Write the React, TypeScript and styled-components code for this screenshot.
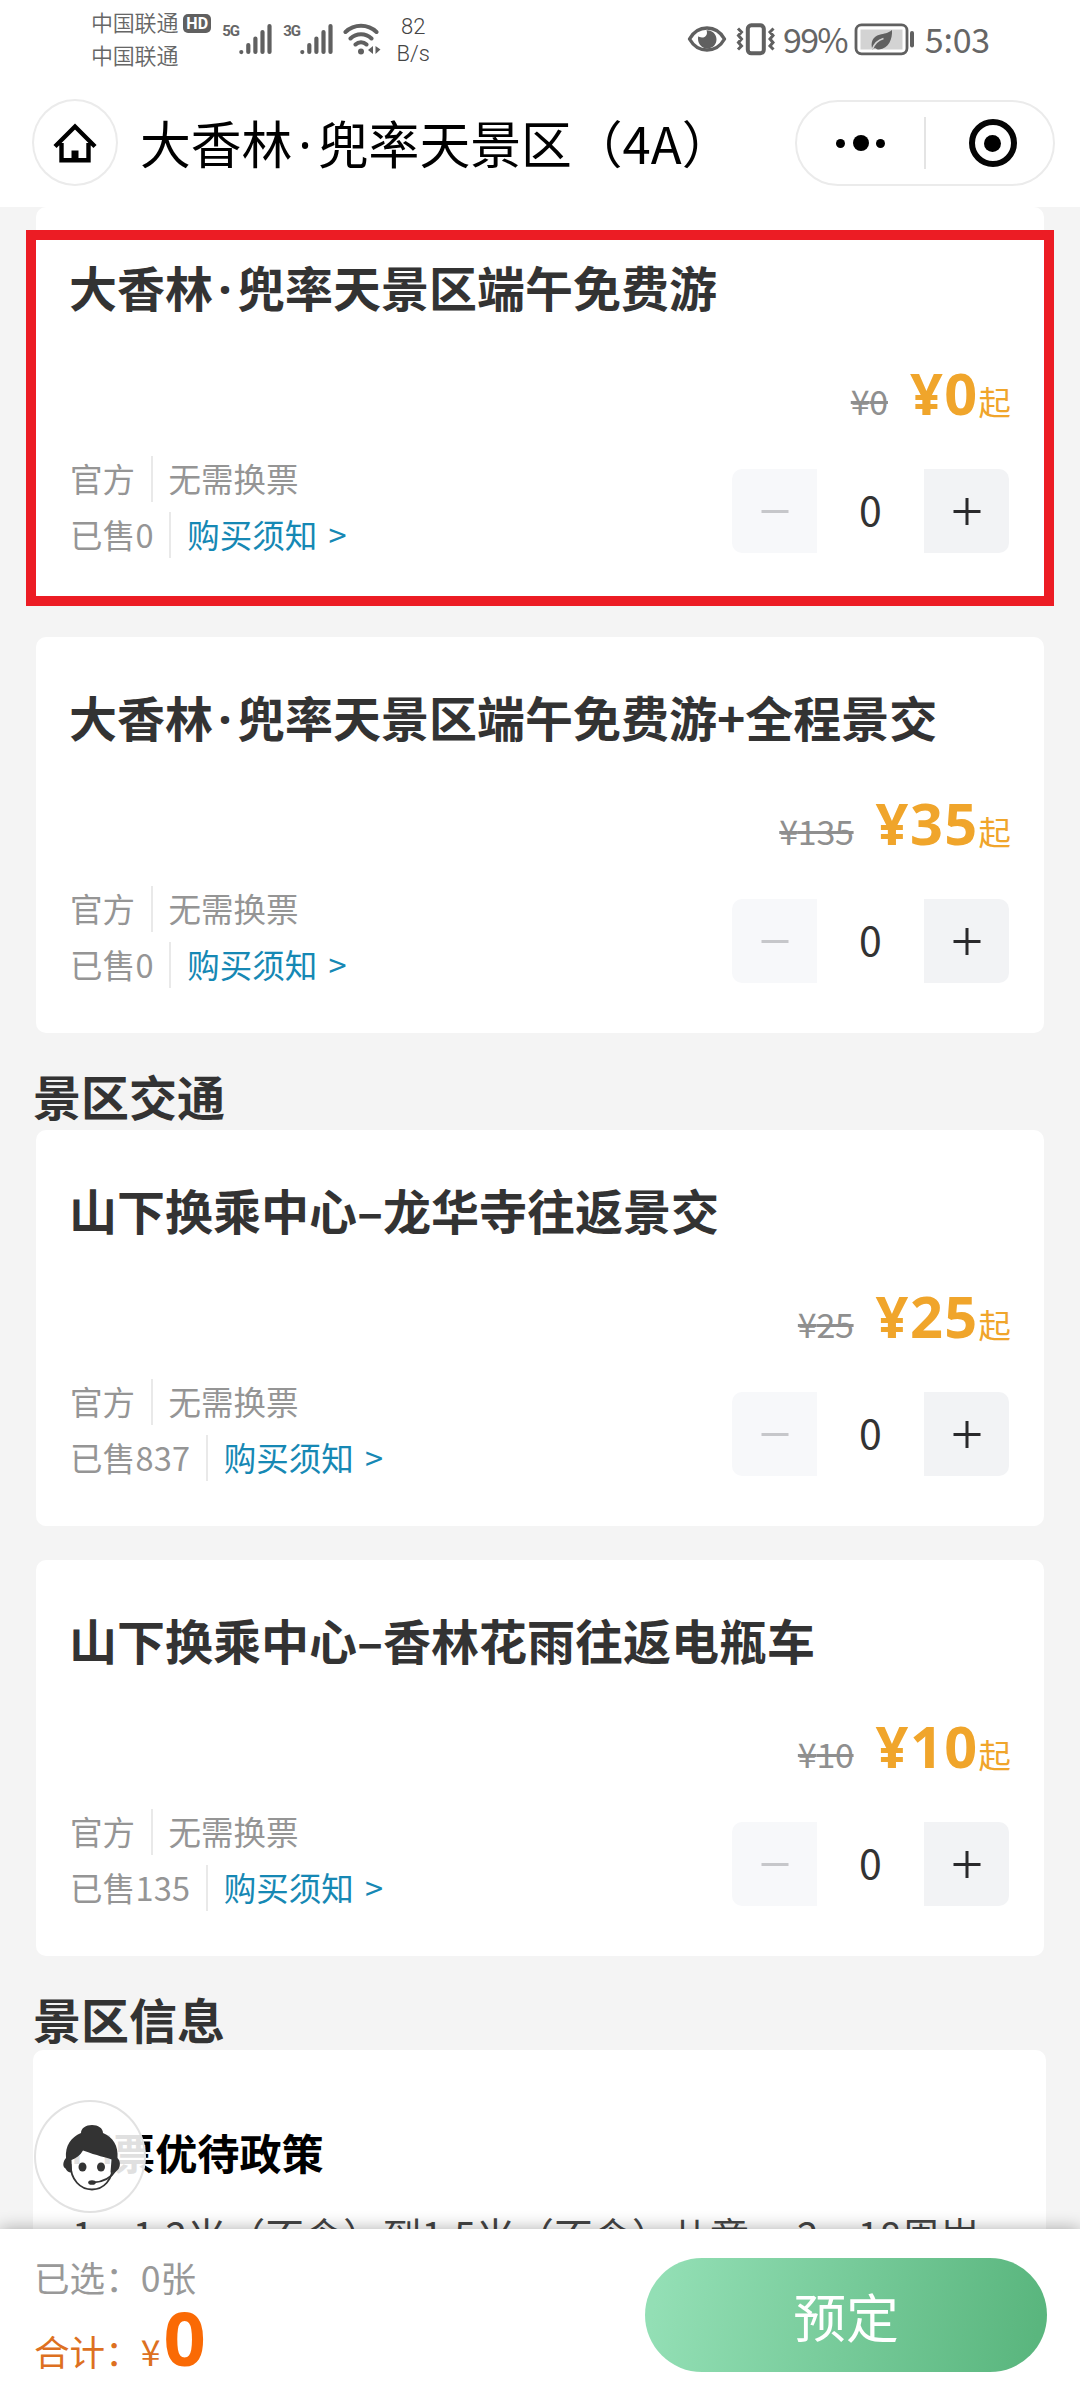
import React from "react";
import styled, { createGlobalStyle } from "styled-components";

const GlobalStyle = createGlobalStyle`
  * { box-sizing: border-box; }
  body {
    margin: 0;
    background: #f4f4f4;
    font-family: "Noto Sans CJK SC", "Noto Sans", sans-serif;
    color: #333;
  }
  button { font-family: inherit; border: 0; padding: 0; }
`;

const Screen = styled.div`
  width: 1080px;
  height: 2400px;
  display: flex;
  flex-direction: column;
  overflow: hidden;
  background: #f4f4f4;
`;

/* ---------- status bar ---------- */

const StatusBar = styled.div`
  height: 80px;
  flex: none;
  display: flex;
  justify-content: space-between;
  padding: 0 90px 0 91px;
  background: #fff;
  color: #666;
`;

const StatusGroup = styled.div`
  display: flex;
  align-items: flex-start;
`;

const Carriers = styled.div`
  padding-top: 5px;
  font-size: 22px;
  line-height: 33px;
  letter-spacing: -0.2px;
  font-weight: 350;
  white-space: nowrap;
`;

const HdBadge = styled.span`
  width: 28px;
  height: 19px;
  margin: 14px 0 0 5px;
  border-radius: 5px;
  background: #606060;
  color: #fff;
  font: 700 16px/19px Roboto, sans-serif;
  text-align: center;
`;

const SignalWrap = styled.div<{ $left: number }>`
  display: flex;
  margin-left: ${(p) => p.$left}px;
  padding-top: 23px;
`;

const NetType = styled.span`
  width: 17px;
  font: 700 15px/16px Roboto, sans-serif;
  letter-spacing: -1px;
`;

const Wifi = styled.svg`
  margin: 22px 0 0 10px;
`;

const Speed = styled.div`
  margin-left: 13px;
  padding-top: 13px;
  width: 34px;
  font: 300 22px/27px Roboto, sans-serif;
  text-align: center;
  color: #444;
`;

const StatusIcon = styled.svg<{ $left?: number }>`
  margin: 22px 0 0 ${(p) => p.$left ?? 0}px;
`;

const StatusText = styled.span<{ $left: number; $track: number }>`
  margin-left: ${(p) => p.$left}px;
  padding-top: 16px;
  font-size: 34px;
  line-height: 46px;
  letter-spacing: ${(p) => p.$track}px;
`;

/* ---------- navigation ---------- */

const NavBar = styled.header`
  height: 127px;
  flex: none;
  display: flex;
  align-items: flex-start;
  padding: 19px 25px 0 32px;
  background: #fff;
`;

const HomeButton = styled.button`
  width: 86px;
  height: 87px;
  border: 2px solid #ebebeb;
  border-radius: 50%;
  background: #fff;
  display: flex;
  align-items: center;
  justify-content: center;
`;

const NavTitle = styled.h1`
  flex: 1;
  margin: 11px 0 0 22px;
  font-size: 50.8px;
  line-height: 64px;
  font-weight: 400;
  color: #000;
  white-space: nowrap;
`;

const MiddleDot = styled.span`
  display: inline-block;
  width: 0.5em;
  font-family: "Noto Sans", sans-serif;
  line-height: 1;
  text-align: center;
`;

const Capsule = styled.div`
  width: 260px;
  height: 86px;
  margin-top: 1px;
  border: 2px solid #ebebeb;
  border-radius: 43px;
  display: flex;
  align-items: center;
`;

const CapsuleHalf = styled.div<{ $inset?: number }>`
  width: 127px;
  display: flex;
  align-items: center;
  justify-content: center;
  gap: 7.5px;
  padding-left: ${(p) => p.$inset ?? 0}px;
`;

const CapsuleRule = styled.div`
  width: 2px;
  height: 52px;
  background: #e4e4e4;
`;

const Dot = styled.i<{ $size: number }>`
  width: ${(p) => p.$size}px;
  height: ${(p) => p.$size}px;
  border-radius: 50%;
  background: #000;
`;

const Target = styled.div`
  width: 48px;
  height: 48px;
  flex: none;
  border: 6px solid #050505;
  border-radius: 50%;
  display: flex;
  align-items: center;
  justify-content: center;
`;

/* ---------- feed ---------- */

const Feed = styled.main`
  flex: 1;
  min-height: 0;
  overflow: hidden;
  padding: 0 36px;
  position: relative;
`;

const TicketList = styled.div`
  display: flex;
  flex-direction: column;
  gap: 34px;
`;

const Card = styled.article`
  height: 396px;
  padding: 49px 34px 0 34px;
  border-radius: 10px;
  background: #fff;
`;

const CardTitle = styled.h2`
  margin: 0 0 0 -1px;
  font-size: 48px;
  line-height: 60px;
  font-weight: 700;
  white-space: nowrap;
`;

const PriceRow = styled.div`
  display: flex;
  justify-content: flex-end;
  align-items: baseline;
  height: 60px;
  margin: 47px -1px 0 0;
  line-height: 60px;
  white-space: nowrap;
`;

const OldPrice = styled.del`
  margin-right: 22px;
  font-size: 34px;
  letter-spacing: -0.3px;
  color: #8f8f8f;
  text-decoration-thickness: 3px;
`;

const Price = styled.strong`
  font-family: "Noto Sans", "Noto Sans CJK SC", sans-serif;
  font-size: 57.6px;
  letter-spacing: 1.4px;
  color: #f0a52b;
`;

const PriceSuffix = styled.span`
  font-size: 32.4px;
  color: #f0a52b;
`;

const CardBottom = styled.div`
  display: flex;
  justify-content: space-between;
  margin: 33px 1px 0 0;
`;

const Metas = styled.div`
  display: flex;
  flex-direction: column;
  gap: 10px;
`;

const MetaLine = styled.div`
  display: flex;
  height: 46px;
  font-size: 32.5px;
  line-height: 44px;
  color: #959595;
  white-space: nowrap;
`;

const MetaRule = styled.i`
  width: 2px;
  height: 46px;
  margin: 0 16px 0 15.5px;
  background: #e9e9e9;
`;

const Sold = styled.span`
  letter-spacing: 0.2px;
`;

const Notice = styled.a`
  color: #1688b4;
  word-spacing: 4px;
`;

const Stepper = styled.div`
  display: flex;
  align-items: center;
  height: 84px;
  margin-top: 13px;
`;

const StepButton = styled.button<{ $kind: "minus" | "plus" }>`
  width: 85px;
  height: 84px;
  display: flex;
  align-items: center;
  justify-content: center;
  border-radius: ${(p) => (p.$kind === "minus" ? "10px 0 0 10px" : "0 10px 10px 0")};
  background: ${(p) => (p.$kind === "minus" ? "#f7f8fa" : "#f2f3f5")};
  color: ${(p) => (p.$kind === "minus" ? "#c6c7ca" : "#29292b")};
`;

const StepValue = styled.span`
  width: 107px;
  height: 84px;
  font-size: 41px;
  line-height: 79px;
  text-align: center;
`;

const SectionTitle = styled.h2<{ $height: number }>`
  height: ${(p) => p.$height}px;
  margin: 0 0 0 -3px;
  padding-top: 32px;
  font-size: 48px;
  line-height: 60px;
  font-weight: 700;
`;

const InfoCard = styled.section`
  height: 400px;
  margin: 0 -2px 0 -3px;
  padding: 76px 37px 0 38px;
  border-radius: 10px;
  background: #fff;
`;

const InfoTitle = styled.h3`
  margin: 0;
  font-size: 42.1px;
  line-height: 52px;
  font-weight: 700;
  color: #000;
`;

const InfoText = styled.p`
  margin: 30px 0 0 1px;
  font-size: 38.9px;
  line-height: 52px;
  letter-spacing: 0.15px;
  color: #444;
  white-space: nowrap;
`;

const Highlight = styled.div`
  position: absolute;
  z-index: 1;
  left: 26px;
  top: 23px;
  width: 1028px;
  height: 376px;
  border: 10px solid #ec1c24;
  pointer-events: none;
`;

const ServiceButton = styled.button`
  position: absolute;
  left: 34px;
  top: 1893px;
  width: 112px;
  height: 113px;
  border: 2px solid #e2e2e2;
  border-radius: 50%;
  background: rgba(255, 255, 255, 0.88);
  display: flex;
  align-items: center;
  justify-content: center;
  padding: 3px 0 0 3px;
`;

/* ---------- footer ---------- */

const Footer = styled.footer`
  position: relative;
  z-index: 2;
  height: 171px;
  flex: none;
  display: flex;
  justify-content: space-between;
  padding: 29px 33px 0 34px;
  background: #fff;
  box-shadow: 0 0 16px rgba(0, 0, 0, 0.32);
`;

const Summary = styled.div`
  font-size: 35.6px;
  white-space: nowrap;
`;

const Selected = styled.div`
  margin-top: -6px;
  line-height: 50px;
  color: #999;
`;

const Total = styled.div`
  display: flex;
  align-items: baseline;
  height: 80px;
  margin-top: -4px;
  line-height: 80px;
  color: #dd7021;
`;

const TotalValue = styled.strong`
  margin-left: 3px;
  font-family: "Noto Sans", sans-serif;
  font-size: 74px;
  color: #fa6a05;
`;

const BookButton = styled.button`
  width: 402px;
  height: 114px;
  border-radius: 57px;
  background: linear-gradient(100deg, #93dfb5 4%, #5ab67e 96%);
  color: #fff;
  font-size: 52.8px;
  line-height: 112px;
`;

/* ---------- drawings ---------- */

const Bars = () => (
  <svg width="33" height="32" viewBox="0 0 33 32" stroke="#606060" strokeWidth="4.2" strokeLinecap="round">
    <path d="M2.3 29v0.1M9.3 22v7M16.4 15.500v13.500M23.500 9v20M30.500 3v26" />
  </svg>
);

const Signal = ({ type, left }: { type: string; left: number }) => (
  <SignalWrap $left={left}>
    <NetType>{type}</NetType>
    <Bars />
  </SignalWrap>
);

const WifiIcon = () => (
  <Wifi width="40" height="34" viewBox="0 0 40 34" fill="none" stroke="#606060" strokeWidth="4" strokeLinecap="round">
    <path d="M2.500 10a22.500 22.500 0 0 1 31 0M7.500 16.500a15 15 0 0 1 21 0M12.500 22.500a8 8 0 0 1 11 0" />
    <circle cx="18" cy="29.500" r="3" fill="#606060" stroke="none" />
    <path d="M30 24v8l-5-4zM32.500 24v8l5-4.500z" fill="#606060" stroke="none" />
  </Wifi>
);

const EyeIcon = () => (
  <StatusIcon width="40" height="34" viewBox="0 0 40 34" fill="none">
    <path d="M2.500 17C7 9 13 6 20 6s13 3 17.500 11C33 25 27 28 20 28S7 25 2.500 17z" stroke="#606060" strokeWidth="3.4" strokeLinejoin="round" />
    <path d="M19.500 8.200c1.500 3.800-.5 7.300-4.500 7.300-1.800 0-3-.7-3.800-1.200-1.200 6.700 3 12.200 9 12.200 5.300 0 9.300-4 9.300-9.300 0-5.200-4.500-9.200-10-9z" fill="#606060" />
  </StatusIcon>
);

const VibrateIcon = () => (
  <StatusIcon $left={9} width="40" height="34" viewBox="0 0 40 34" fill="none" stroke="#606060">
    <rect x="11.800" y="3.300" width="16" height="28" rx="3.500" strokeWidth="4" />
    <path d="M2 6.500l3.500 3.500L2.500 13.500l3 3.500-3 3.500 3 3.500L2 27.500M37.500 6.500L34 10l3 3.500-3 3.500 3 3.500-3 3.500 3.500 3.500" strokeWidth="3" />
  </StatusIcon>
);

const BatteryIcon = () => (
  <StatusIcon $left={7} width="62" height="34" viewBox="0 0 62 34" fill="none">
    <rect x="2" y="2.800" width="51" height="29" rx="5.500" stroke="#606060" strokeWidth="2.800" />
    <rect x="6.500" y="7.500" width="42" height="20" fill="#d3d3d3" />
    <path d="M18.500 27.500c-2.500-7 .5-13 7-14.700 5-1.500 8-1.300 12.500-4.800.5 9-3 18.500-13 19.500-2 0-3-.6-4-1.500z" fill="#606060" />
    <path d="M18.500 27c2-6 6-9 11-10.500" stroke="#d3d3d3" strokeWidth="1.800" />
    <path d="M58 11v12.500" stroke="#606060" strokeWidth="4" strokeLinecap="round" />
  </StatusIcon>
);

const HomeIcon = () => (
  <svg width="46" height="42" viewBox="0 0 46 42">
    <path d="M3 24.500L23 4.500l20 20M9.500 21v17.300h27V21" fill="none" stroke="#000" strokeWidth="4.400" />
    <path d="M19.500 28.500h7V39h-7z" fill="#000" />
  </svg>
);

const AgentIcon = () => (
  <svg width="60" height="68" viewBox="0 0 60 68">
    <path d="M8.500 40c0 16 10 25.500 21.500 25.500S51 56 51 40" fill="#fff" stroke="#333" strokeWidth="1.800" />
    <path d="M4 34C3 22 9 13 19 9c0-5 5-8 11-8s11 3 11 8c10 4 15.500 13 14.500 25 3 3 3 8 1 11-2 2.500-5 4-8 3.500l1-13C43 33 36 32 21 26.500c-3 5-7 8-11.500 9.500L10 48.500c-3 .3-5-1-6.500-4C.5 43 .5 38 4 34z" fill="#333" />
    <ellipse cx="20.500" cy="43" rx="4" ry="4.500" fill="#333" />
    <ellipse cx="39" cy="43" rx="4" ry="4.500" fill="#333" />
    <ellipse cx="30" cy="58.500" rx="3.800" ry="2.300" fill="#333" />
    <path d="M31 58.500C42 58 49 54 54 46" fill="none" stroke="#333" strokeWidth="1.800" />
  </svg>
);

const StepIcon = ({ plus }: { plus?: boolean }) => (
  <svg width="28" height="28" viewBox="0 0 28 28" stroke="currentColor" strokeWidth="3">
    <path d={plus ? "M.5 14.500h27M14 1v27" : "M.5 14.500h27"} />
  </svg>
);

/* ---------- page ---------- */

const withDot = (text: string) => {
  const [head, tail] = text.split("·");
  return tail ? (
    <>
      {head}
      <MiddleDot>·</MiddleDot>
      {tail}
    </>
  ) : (
    head
  );
};

type Ticket = { title: string; old: number; price: number; sold: number };

const tickets: Ticket[] = [
  { title: "大香林·兜率天景区端午免费游", old: 0, price: 0, sold: 0 },
  { title: "大香林·兜率天景区端午免费游+全程景交", old: 135, price: 35, sold: 0 },
];

const transport: Ticket[] = [
  { title: "山下换乘中心–龙华寺往返景交", old: 25, price: 25, sold: 837 },
  { title: "山下换乘中心–香林花雨往返电瓶车", old: 10, price: 10, sold: 135 },
];

const TicketCard = ({ title, old, price, sold }: Ticket) => (
  <Card>
    <CardTitle>{withDot(title)}</CardTitle>
    <PriceRow>
      <OldPrice>¥{old}</OldPrice>
      <Price>¥{price}</Price>
      <PriceSuffix>起</PriceSuffix>
    </PriceRow>
    <CardBottom>
      <Metas>
        <MetaLine>
          官方
          <MetaRule />
          无需换票
        </MetaLine>
        <MetaLine>
          <Sold>已售{sold}</Sold>
          <MetaRule />
          <Notice>购买须知 &gt;</Notice>
        </MetaLine>
      </Metas>
      <Stepper>
        <StepButton $kind="minus" aria-label="减少">
          <StepIcon />
        </StepButton>
        <StepValue>0</StepValue>
        <StepButton $kind="plus" aria-label="增加">
          <StepIcon plus />
        </StepButton>
      </Stepper>
    </CardBottom>
  </Card>
);

export default function App() {
  return (
    <Screen>
      <GlobalStyle />
      <StatusBar>
        <StatusGroup>
          <Carriers>
            <div>中国联通</div>
            <div>中国联通</div>
          </Carriers>
          <HdBadge>HD</HdBadge>
          <Signal type="5G" left={11} />
          <Signal type="3G" left={11} />
          <WifiIcon />
          <Speed>
            <div>82</div>
            <div>B/s</div>
          </Speed>
        </StatusGroup>
        <StatusGroup>
          <EyeIcon />
          <VibrateIcon />
          <StatusText $left={7} $track={-1.8}>99%</StatusText>
          <BatteryIcon />
          <StatusText $left={9} $track={-0.2}>5:03</StatusText>
        </StatusGroup>
      </StatusBar>
      <NavBar>
        <HomeButton aria-label="首页">
          <HomeIcon />
        </HomeButton>
        <NavTitle>{withDot("大香林·兜率天景区（4A）")}</NavTitle>
        <Capsule>
          <CapsuleHalf>
            <Dot $size={9} />
            <Dot $size={16} />
            <Dot $size={9} />
          </CapsuleHalf>
          <CapsuleRule />
          <CapsuleHalf $inset={6}>
            <Target>
              <Dot $size={17} />
            </Target>
          </CapsuleHalf>
        </Capsule>
      </NavBar>
      <Feed>
        <TicketList>
          {tickets.map((t) => (
            <TicketCard key={t.title} {...t} />
          ))}
        </TicketList>
        <SectionTitle $height={97}>景区交通</SectionTitle>
        <TicketList>
          {transport.map((t) => (
            <TicketCard key={t.title} {...t} />
          ))}
        </TicketList>
        <SectionTitle $height={94}>景区信息</SectionTitle>
        <InfoCard>
          <InfoTitle>门票优待政策</InfoTitle>
          <InfoText>1、1.2米（不含）到1.5米（不含）儿童、 2、18周岁</InfoText>
        </InfoCard>
        <Highlight />
        <ServiceButton aria-label="客服">
          <AgentIcon />
        </ServiceButton>
      </Feed>
      <Footer>
        <Summary>
          <Selected>已选：0张</Selected>
          <Total>
            合计：¥<TotalValue>0</TotalValue>
          </Total>
        </Summary>
        <BookButton>预定</BookButton>
      </Footer>
    </Screen>
  );
}
